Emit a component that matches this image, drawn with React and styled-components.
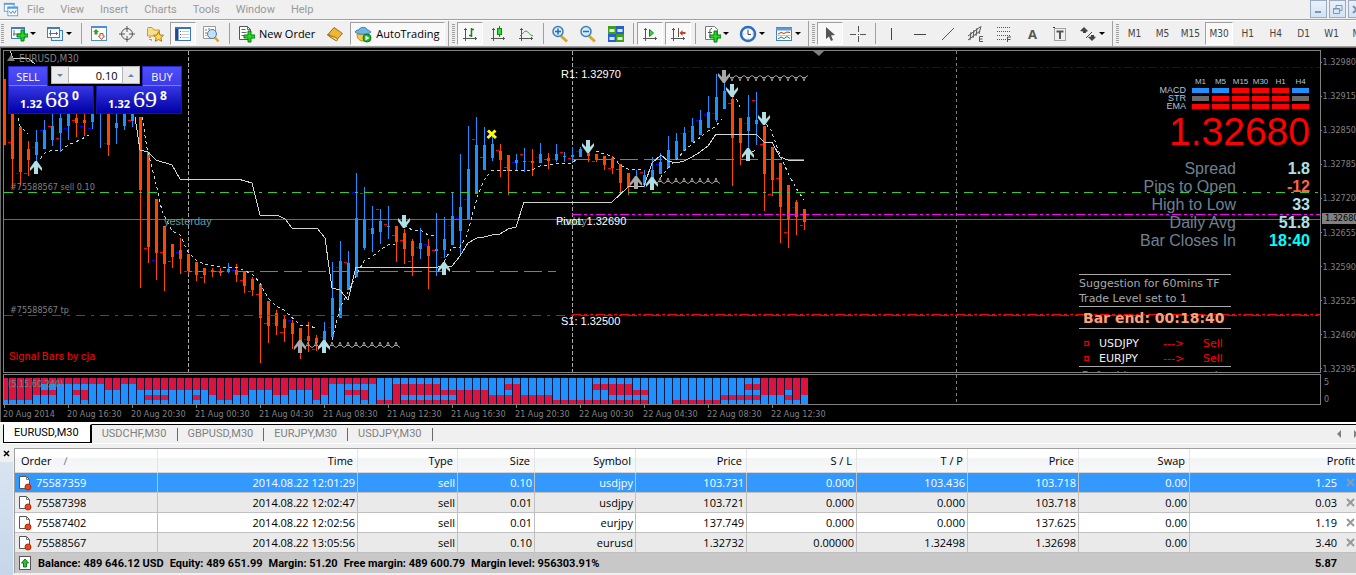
import React from "react";
import styled, { createGlobalStyle, css } from "styled-components";

const UP = "#1e90ff";
const DOWN = "#ff4500";
const CRIMSON = "#dc143c";

const menuItems = ["File", "View", "Insert", "Charts", "Tools", "Window", "Help"];
const timeframes = ["M1", "M5", "M15", "M30", "H1", "H4", "D1", "W1", "MN"];
const chartTabs = ["EURUSD,M30", "USDCHF,M30", "GBPUSD,M30", "EURJPY,M30", "USDJPY,M30"];

const prices = [
  "1.32980", "1.32915", "1.32850", "1.32785", "1.32720",
  "1.32655", "1.32590", "1.32525", "1.32460", "1.32395",
];

const times = [
  "20 Aug 2014", "20 Aug 16:30", "20 Aug 20:30", "21 Aug 00:30", "21 Aug 04:30",
  "21 Aug 08:30", "21 Aug 12:30", "21 Aug 16:30", "21 Aug 20:30", "22 Aug 00:30",
  "22 Aug 04:30", "22 Aug 08:30", "22 Aug 12:30",
];

// [direction, high, body top, body bottom, low], one every 8px
const candles = [
  ["d", 79, 79, 145, 145], ["d", 100, 100, 159, 189], ["d", 127, 127, 172, 186], ["d", 141, 149, 160, 176],
  ["u", 130, 142, 155, 163], ["u", 120, 130, 149, 149], ["u", 114, 126, 140, 146], ["u", 114, 118, 133, 152],
  ["u", 110, 110, 126, 140], ["d", 114, 118, 123, 137], ["d", 114, 120, 123, 136], ["u", 110, 110, 122, 129],
  ["u", 110, 110, 114, 148], ["d", 110, 110, 145, 156], ["u", 110, 123, 128, 144], ["u", 110, 112, 126, 130],
  ["u", 110, 112, 121, 127], ["d", 117, 117, 190, 288], ["d", 152, 152, 247, 263], ["d", 199, 199, 253, 280],
  ["d", 226, 226, 264, 291], ["d", 244, 244, 257, 268], ["d", 238, 250, 259, 274], ["d", 254, 254, 271, 274],
  ["d", 262, 262, 275, 281], ["d", 268, 268, 275, 283], ["d", 268, 270, 272, 277], ["d", 268, 271, 273, 276],
  ["u", 263, 269, 272, 273], ["d", 264, 270, 275, 282], ["d", 272, 272, 286, 293], ["d", 277, 279, 290, 296],
  ["d", 284, 284, 318, 363], ["d", 301, 301, 326, 343], ["d", 310, 313, 326, 335], ["d", 316, 319, 328, 342],
  ["d", 320, 323, 334, 349], ["d", 328, 328, 345, 359], ["d", 322, 336, 341, 352], ["d", 335, 338, 343, 351],
  ["u", 322, 331, 344, 345], ["u", 262, 298, 337, 338], ["u", 241, 261, 318, 318], ["u", 251, 263, 290, 290],
  ["u", 173, 218, 277, 277], ["u", 187, 219, 248, 250], ["u", 206, 228, 234, 252], ["u", 209, 221, 232, 244],
  ["u", 206, 226, 227, 239], ["d", 226, 226, 242, 262], ["d", 229, 233, 249, 264], ["d", 239, 241, 256, 276],
  ["u", 228, 243, 249, 259], ["d", 239, 246, 256, 289], ["u", 213, 249, 251, 276], ["u", 217, 239, 250, 258],
  ["u", 192, 216, 245, 245], ["u", 154, 207, 231, 256], ["u", 126, 169, 219, 219], ["u", 117, 145, 194, 194],
  ["u", 127, 145, 170, 170], ["u", 132, 144, 158, 161], ["d", 144, 151, 160, 177], ["d", 155, 155, 171, 195],
  ["u", 154, 160, 163, 170], ["u", 148, 161, 162, 172], ["d", 149, 161, 163, 176], ["u", 143, 154, 163, 163],
  ["d", 153, 158, 161, 169], ["u", 144, 154, 160, 162], ["u", 152, 156, 157, 162], ["u", 147, 155, 157, 162],
  ["u", 147, 149, 157, 157], ["d", 150, 153, 156, 162], ["d", 154, 154, 160, 162], ["d", 156, 156, 165, 170],
  ["d", 156, 158, 168, 174], ["d", 164, 164, 183, 195], ["d", 173, 173, 187, 195], ["u", 170, 177, 184, 185],
  ["u", 170, 175, 185, 187], ["u", 157, 170, 179, 181], ["u", 153, 162, 174, 174], ["u", 136, 150, 168, 168],
  ["u", 133, 141, 160, 160], ["u", 127, 133, 151, 151], ["u", 118, 126, 142, 142], ["u", 110, 120, 135, 135],
  ["u", 96, 112, 128, 128], ["u", 74, 97, 120, 122], ["u", 74, 91, 109, 109], ["d", 97, 99, 138, 186],
  ["d", 118, 118, 143, 165], ["u", 95, 117, 131, 148], ["u", 92, 120, 124, 145], ["d", 126, 126, 174, 211],
  ["d", 147, 147, 180, 196], ["d", 163, 163, 207, 243], ["d", 185, 185, 220, 248], ["d", 200, 202, 217, 235],
  ["d", 209, 209, 222, 230],
];

// small open and close marks to the left of a candle: index, y
const redMarks = [
  [1, 142], [3, 173], [6, 126], [7, 138], [9, 120], [16, 120], [18, 248], [20, 252], [21, 261], [23, 271],
  [25, 277], [27, 271], [30, 280], [31, 291], [32, 294], [33, 323], [35, 332], [37, 345], [39, 349], [43, 262],
  [45, 193], [47, 209], [48, 224], [49, 235], [50, 240], [51, 261], [54, 250], [59, 139], [60, 157], [62, 150],
  [63, 167], [65, 154], [68, 159], [70, 152], [71, 158], [74, 161], [76, 168], [77, 169], [80, 172], [91, 103],
  [94, 100], [95, 144], [96, 194], [97, 178], [98, 232], [100, 225],
];
const blueMarks = [
  [2, 173], [4, 147], [5, 130], [8, 128], [10, 126], [11, 128], [13, 143], [19, 260], [22, 252], [24, 271],
  [26, 271], [28, 271], [29, 270], [34, 323], [36, 320], [38, 339], [40, 337], [41, 327], [42, 267], [44, 192],
  [46, 229], [52, 247], [53, 244], [55, 257], [56, 225], [57, 218], [58, 199], [61, 134], [64, 162], [66, 161],
  [67, 157], [69, 159], [72, 151], [82, 164], [85, 133], [86, 131], [87, 120], [88, 114], [89, 113], [90, 79],
  [93, 123], [99, 207],
];

const slowLines = [
  "10,51 13,58 28,58 35,64",
  "135,117 140,150 148,152 156,160 172,165 180,179 238,179 252,183 260,215 277,215 285,219 292,228 317,228 325,238 332,288 340,290 348,300 356,267 438,267 452,266 460,256 468,243 477,238 484,237 492,235 500,234 508,229 516,227 524,202 612,202 628,187 636,186 644,186 652,163 661,155 668,161 676,163 684,161 692,157 700,152 708,146 716,134 756,134 764,142 772,142 780,157 788,160 804,160",
];

const fastLines = [
  "18,118 20,126 28,134",
  "40,159 45,153 52,150 62,150 68,145 80,140 89,135",
  "142,117 147,148 157,188 162,211 172,231 180,235 188,252 196,260 204,264 220,267 236,267 252,274 260,283 268,298 276,306 284,310 300,325 310,326 315,328",
  "332,340 340,308 348,292 356,276 364,261 372,257 380,250 388,245 395,244",
  "404,225 412,230 422,231 428,235 436,235",
  "444,262 452,247 460,247 467,235 472,216 477,198 484,180 492,170 532,170 540,166 556,164 572,163 576,160",
  "596,151 604,154 612,156 620,165 628,169 644,170",
  "660,178 668,168 676,160 684,151 692,144 708,131 716,126 722,119",
  "732,95 737,100 740,107",
  "752,152 757,149",
  "766,124 771,130 780,155 788,173 796,188 804,200",
];

// x, y of the middle, down, muted
const arrows = [
  [36, 167], [404, 222, true], [444, 268], [300, 346, false, true], [324, 346], [588, 147, true],
  [636, 182, false, true], [652, 183], [724, 77, true, true], [732, 91, true], [748, 154], [764, 119, true],
];

// five cells from top to bottom for each bar, then how many times it repeats
const signalRuns = [
  ["RRRRB", 4], ["RRRBB", 1], ["RBRBB", 2], ["RBBBB", 2], ["RBRBB", 1], ["RBRRB", 1], ["RBBBB", 2], ["RRBBB", 2],
  ["RBBBB", 2], ["RRBBB", 1], ["RRBRB", 3], ["RRBBB", 3], ["RRBRB", 1], ["RRBBB", 1], ["RRRBB", 1], ["RRRRB", 2],
  ["RRRBB", 2], ["RRBBB", 3], ["RRRBB", 2], ["RRBBB", 3], ["RRRRB", 1], ["RRRBB", 1], ["RBBBB", 2], ["RBRBB", 2],
  ["RBRRB", 1], ["RBBBB", 1], ["BBBBR", 2], ["BRRRR", 1], ["BRRBR", 5], ["BBRBR", 2], ["BBRRR", 4], ["BBBRR", 2],
  ["BRBRR", 1], ["BRRRR", 1], ["BBBRR", 4], ["BBBBR", 5], ["BRBBR", 2], ["BRRBR", 3], ["BBRBR", 2], ["BBBBB", 3],
  ["BBBBR", 6], ["BBBRB", 3], ["BRBRB", 2], ["RRRBB", 3], ["RRBRB", 1], ["RRRRB", 1], ["RRRBB", 1],
];
const signals = signalRuns.flatMap(([cells, count]) => Array(count).fill(cells));
const signalRows = [[378, 6], [384, 6], [390, 5], [395, 5], [400, 4]];

const trendRows = [
  { name: "MACD", cells: ["b", "b", "r", "r", "r", "b"] },
  { name: "STR", cells: ["g", "r", "r", "r", "r", "g"] },
  { name: "EMA", cells: ["r", "r", "r", "r", "r", "r"] },
];
const trendColors = { b: UP, r: "#ff0000", g: "#696969" };

const stats = [
  ["Spread", "1.8", "#b0e0e6"],
  ["Pips to Open", "-12", "#ff6347"],
  ["High to Low", "33", "#b0e0e6"],
  ["Daily Avg", "51.8", "#b0e0e6"],
  ["Bar Closes In", "18:40", "#00ffff"],
];

const columns = [
  ["Order", 143], ["Time", 200], ["Type", 100], ["Size", 77], ["Symbol", 101], ["Price", 111],
  ["S / L", 110], ["T / P", 111], ["Price", 111], ["Swap", 111], ["Profit", null],
];

const orders = [
  ["75587359", "2014.08.22 12:01:29", "sell", "0.10", "usdjpy", "103.731", "0.000", "103.436", "103.718", "0.00", "1.25"],
  ["75587398", "2014.08.22 12:02:47", "sell", "0.01", "usdjpy", "103.721", "0.000", "0.000", "103.718", "0.00", "0.03"],
  ["75587402", "2014.08.22 12:02:56", "sell", "0.01", "eurjpy", "137.749", "0.000", "0.000", "137.625", "0.00", "1.19"],
  ["75588567", "2014.08.22 13:05:56", "sell", "0.10", "eurusd", "1.32732", "0.00000", "1.32498", "1.32698", "0.00", "3.40"],
];

const summary = [
  "Balance: 489 646.12 USD", "Equity: 489 651.99", "Margin: 51.20",
  "Free margin: 489 600.79", "Margin level: 956303.91%",
];

/* ---------- icons ---------- */

const Icon = ({ children, size = 18 }) => (
  <svg width={size} height={size} viewBox="0 0 18 18" fill="none" aria-hidden="true">{children}</svg>
);

const Plus = ({ x = 10, y = 10 }) => (
  <path d={`M${x} ${y - 4}h3v4h4v3h-4v4h-3v-4h-4v-3h4z`} fill="#1edb1e" stroke="#087a10" />
);

const Axes = () => (
  <path d="M4.5 3v13M2 13.500h14M3 4.500h3M14.500 12v3" stroke="#555" />
);

const icons = {
  newChart: <><rect x="1.500" y="2.500" width="13" height="11" fill="#fff" stroke="#3b80c4" /><path d="M1 3h14" stroke="#3b80c4" strokeWidth="2" /><path d="M4 5v6M3 9h8" stroke="#55708a" /><Plus x={11} y={9} /></>,
  profiles: <><rect x="5.500" y="5.500" width="11" height="10" fill="#e5f0fb" stroke="#3b80c4" /><rect x="1.500" y="2.500" width="12" height="10" fill="#fff" stroke="#3b80c4" /><path d="M1 3h13" stroke="#3b80c4" strokeWidth="2" /><path d="M4.500 5v6M3 8.500h9M10.500 7v3" stroke="#55708a" /></>,
  market: <><rect x="1.500" y="1.500" width="15" height="14" fill="#fff" stroke="#4a8fd0" /><path d="M1 2h16" stroke="#4a8fd0" strokeWidth="2" /><path d="M6 4l3 3H7.500v2.500h-3V7H3z" fill="#29a329" /><path d="M11.500 14.500L14.500 11H13V8.500h-3V11H8.500z" fill="#fff0e8" stroke="#d8481c" /></>,
  target: <><circle cx="9" cy="9" r="5.500" stroke="#555" /><path d="M9 1v6M9 11v6M1 9h6M11 9h6" stroke="#555" /></>,
  navigator: <><path d="M1.500 3.500V11h12V5H8L6 2.500H2z" fill="#f7df8c" stroke="#c89b33" /><path d="M4 12v3h3" stroke="#555" strokeDasharray="1 1" /><path d="M12.500 6.500l1.500 3.500 3.500.3-2.600 2.500.8 3.600-3.200-1.900-3.200 1.900.8-3.600-2.600-2.500 3.500-.3z" fill="#ffd84d" stroke="#a97a1d" /></>,
  terminal: <><rect x="1.500" y="2.500" width="15" height="13" fill="#fff" stroke="#3b72bd" /><path d="M1 3h16" stroke="#3b72bd" strokeWidth="2" /><path d="M3 4v11" stroke="#1c4a94" strokeWidth="3" /><path d="M6 6.500h1M6 9.500h1M6 12.500h1" stroke="#d33" /><path d="M8 6.500h7M8 9.500h7M8 12.500h7" stroke="#b8cbe6" /></>,
  tester: <><path d="M1.500 1.500h12v12h-12z" fill="#fff" stroke="#999" /><path d="M4 4v7M7 3v7M11 4v5" stroke="#777" strokeDasharray="2 1" /><circle cx="10" cy="9" r="4.500" fill="#b9dcf6" fillOpacity=".85" stroke="#4f81ad" /><path d="M13 12.500l3.500 4" stroke="#d6a62e" strokeWidth="2.500" /></>,
  order: <><path d="M2.500 1.500h8l3 3v10h-11z" fill="#fff" stroke="#555" /><path d="M10.500 1.500v3h3M4.500 4.500h4M4.500 7.500h5M4.500 10.500h3" stroke="#666" /><Plus x={11} y={10} /></>,
  editor: <><path d="M1.500 10L8 2.500l8.500 6-6.500 7z" fill="#edb637" stroke="#a36b12" /><path d="M1.500 10c1.500-2 3 0 2 1.500l7 4.500c1.500-1 1-2.500-.5-3.500z" fill="#ffe08a" stroke="#a36b12" /></>,
  auto: <><path d="M3 9c0 5 3 7 6 7s6-2 6-7z" fill="#f3c94a" stroke="#b98a20" /><path d="M1 7c1-2 3-2 4-2 0-3 8-4 8 0 2 0 3 1 4 2-4 3-12 3-16 0z" fill="#6fb5e6" stroke="#3f81b5" /><circle cx="13" cy="13" r="4" fill="#1fb52b" stroke="#0b7d16" /><path d="M11.500 10.500v5l4-2.500z" fill="#fff" /></>,
  bars: <><Axes /><path d="M10.500 3v9M8 10.500h2M11 4.500h2" stroke="#0b8a16" strokeWidth="1.500" /></>,
  candles: <><Axes /><path d="M10.500 1v11" stroke="#0b8a16" /><rect x="8.500" y="3.500" width="4" height="6" fill="#2fe03c" stroke="#0b8a16" /></>,
  line: <><Axes /><path d="M3 11c3-2 4-5 6-5s3 4 7 5" stroke="#2aa336" /></>,
  zoomIn: <><path d="M10 11l6 5.500" stroke="#d6a62e" strokeWidth="3" /><circle cx="7" cy="6.500" r="5" fill="#d5ebfb" stroke="#3c7fb8" strokeWidth="1.500" /><path d="M4 6.500h6M7 3.500v6" stroke="#2a6aa5" strokeWidth="1.500" /></>,
  zoomOut: <><path d="M10 11l6 5.500" stroke="#d6a62e" strokeWidth="3" /><circle cx="7" cy="6.500" r="5" fill="#d5ebfb" stroke="#3c7fb8" strokeWidth="1.500" /><path d="M4 6.500h6" stroke="#2a6aa5" strokeWidth="1.500" /></>,
  tile: <><path d="M1 1h8v8H1zM9 9h8v8H9z" fill="#3f9e1e" /><path d="M9 1h8v8H9zM1 9h8v8H1z" fill="#2560cf" /><path d="M2.500 4h5v3h-5zM10.500 12h5v3h-5z" fill="#d9f2cf" /><path d="M10.500 4h5v3h-5zM2.500 12h5v3h-5z" fill="#dae7ff" /></>,
  scroll: <><Axes /><path d="M8.500 4.500v7l4-3.500z" fill="#3fd34b" stroke="#0b8a16" /></>,
  shift: <><Axes /><path d="M9.500 3v9" stroke="#555" /><path d="M10.500 8l3-3v2h3v2h-3v2z" fill="#c4401e" /></>,
  indicators: <><path d="M2.500 1.500h9l3 3v10h-12z" fill="#fff" stroke="#777" /><path d="M9 3.500c-3 0-2 3-2 9M5 7.500h4" stroke="#555" /><Plus x={11} y={10} /></>,
  clock: <><circle cx="9" cy="9" r="7" fill="#f4faff" stroke="#2c6fc0" strokeWidth="2.500" /><path d="M9 5v4.500h3" stroke="#444" /><path d="M9 3.500v1M9 13.500v1M3.500 9h1M13.500 9h1" stroke="#999" /></>,
  templates: <><rect x="1.500" y="2.500" width="15" height="13" fill="#fff" stroke="#3b80c4" /><path d="M1 4h16" stroke="#5b9bdb" strokeWidth="3" /><path d="M3 9l3-1.500 3 1 3-1.500 3 .5" stroke="#b33a1e" /><path d="M1.500 10.500h15" stroke="#a9c8ea" /><path d="M3 14l3-2 3 1.500 3-2 3 2" stroke="#238f2b" /></>,
  cursor: <path d="M5 2v12l3-2.500L10 16l2-1-2-4.500 4-.5z" fill="#555" />,
  cross: <path d="M9.500 1v6M9.500 11v6M1 9.500h6M11 9.500h6M9 9.500h1" stroke="#555" />,
  vline: <path d="M8.500 3v12" stroke="#444" />,
  hline: <path d="M3 9.500h12" stroke="#444" />,
  trend: <path d="M3 15L15 3" stroke="#555" />,
  channel: <><path d="M1 11L13 2M1 15L13 6M4 7l-1 8M7 5l-1 8M10 3l-1 8M14 1l-2 8" stroke="#555" /><path d="M16 11.500h-3.500v5H16M13 14h2.500" stroke="#555" /></>,
  fibo: <><path d="M2 2.500h13M2 6.500h13M2 10.500h13M2 14.500h9" stroke="#555" strokeDasharray="1 1" /><path d="M12.500 17v-5H16M13 14.500h2.500" stroke="#555" /></>,
  label: <><rect x="3.500" y="3.500" width="11" height="12" stroke="#555" strokeDasharray="1 1" /><path d="M2 2.500h2" stroke="#333" /><path d="M5.500 6.500h7M9 6v8" stroke="#555" strokeWidth="2" /></>,
  shapes: <><path d="M5 2l4 4-2 1v1H4V6.500L1 6zM13 16l4-4-2-.5V10h-3v1.500L9 12z" fill="#444" /><path d="M7 13L13 7" stroke="#444" /></>,
};

const OrderIcon = () => (
  <svg width="14" height="16" viewBox="0 0 14 16" fill="none" aria-hidden="true">
    <path d="M1.500 1.500h7l3 3v9h-10z" fill="#fff" stroke="#555" />
    <path d="M8.500 1.500v3h3" stroke="#777" />
    <circle cx="10" cy="12" r="3" fill="#e8461e" stroke="#a82c0c" />
  </svg>
);

const BalanceIcon = () => (
  <svg width="14" height="14" viewBox="0 0 14 14" fill="none" aria-hidden="true">
    <rect x="1.500" y=".5" width="11" height="13" fill="#fff" stroke="#555" />
    <path d="M7 3l3.500 4H8.500v4h-3V7h-2z" fill="#2fc02f" stroke="#0b7d16" />
  </svg>
);

/* ---------- chart drawing ---------- */

const SignalArrow = ({ x, y, down, muted }) => (
  <g transform={`translate(${x} ${y})${down ? " scale(1 -1)" : ""}`}>
    <path d="M-6 1L-1 -6H1L6 1V4L2 0V7H-2V0L-6 4Z" fill={muted ? "#a9a9a9" : "#b0e0e6"} />
  </g>
);

const Scallops = ({ from, to, y, down }) => {
  const xs = [];
  for (let x = from; x <= to; x += 8) xs.push(x);
  return (
    <g transform={`translate(0 ${y})${down ? " scale(1 -1)" : ""}`} stroke="#a39a94" fill="none">
      {xs.map((x) => <path key={x} d={`M${x - 4} 2.500Q${x - 1} 2 ${x} -3Q${x + 1} 2 ${x + 4} 2.500M${x - 2} .5h4`} />)}
    </g>
  );
};

const PriceChart = () => (
  <PlotSvg height="321">
    <g transform="translate(-4 -51)" shapeRendering="crispEdges">
      <g stroke="#a9a9a9" strokeDasharray="4 2">
        <path d="M188.500 51V372M572.500 51V372" />
        <path d="M956.500 51V372" stroke="#808080" strokeDasharray="3 3" />
      </g>
      <path d="M572 67.500H4000" stroke="#0000ff" strokeDasharray="9 3 3 3 3 3" opacity=".8" />
      <path d="M188 271.500H556M572 159.500H804" stroke="#708090" strokeDasharray="18 6" />
      <path d="M4 219.500H4000" stroke="#696969" />

      {candles.map(([dir, high, top, bottom, low], i) => {
        const x = 4 + i * 8;
        return (
          <g key={i} fill={dir === "u" ? UP : DOWN}>
            <rect x={x} y={high} width="1" height={low - high} />
            <rect x={x - 1} y={top} width="3" height={Math.max(bottom - top, 1)} />
          </g>
        );
      })}
      {redMarks.map(([i, y]) => <rect key={i} x={i * 8} y={y} width="3" height="1" fill="#ff0000" />)}
      {blueMarks.map(([i, y]) => <rect key={i} x={i * 8} y={y} width="3" height="1" fill="#0000ff" />)}

      <path d="M4 192.500H4000" stroke="#32cd32" strokeDasharray="9 6 3 6" />
      <path d="M4 315.500H4000" stroke="#ff0000" strokeDasharray="9 6 3 6" />
      <path d="M572 314.500H4000" stroke="#ff0000" strokeDasharray="9 3 3 3 3 3" />
      <path d="M572 214.500H4000" stroke="#ff00ff" strokeDasharray="9 3 3 3 3 3" />

      {slowLines.map((points) => <polyline key={points} points={points} fill="none" stroke="#d3d3d3" />)}
      {fastLines.map((points) => (
        <polyline key={points} points={points} fill="none" stroke="#b0e0e6" strokeDasharray="3 3" />
      ))}
    </g>
    <g transform="translate(-4 -51)">
      <Scallops from={308} to={396} y={345} />
      <Scallops from={660} to={716} y={181} />
      <Scallops from={732} to={804} y={78} down />
      {arrows.map(([x, y, down, muted]) => (
        <SignalArrow key={`${x}-${y}`} x={x} y={y} down={down} muted={muted} />
      ))}
      <path d="M488 130.500L496 138M495.500 130.500L487.500 138" stroke="#ffff00" strokeWidth="3" />
      <path d="M813 51h11l-5 5z" fill="#808080" />
      <path d="M7 61h8l-4-6z" fill="#808080" />
      <ChartLabel x="19" y="62" $size={10}>EURUSD,M30</ChartLabel>
      <ChartLabel x="10" y="190">#75588567 sell 0.10</ChartLabel>
      <ChartLabel x="10" y="313">#75588567 tp</ChartLabel>
      <Caption x="9" y="360" fill="#ff0000">Signal Bars by cja</Caption>
      <LevelLabel x="164" y="225" fill="#5f9ea0">yesterday</LevelLabel>
      <LevelLabel x="560" y="225" fill="#5f9ea0">today</LevelLabel>
      <LevelLabel x="561" y="78">R1: 1.32970</LevelLabel>
      <LevelLabel x="556" y="225">Pivot: 1.32690</LevelLabel>
      <LevelLabel x="561" y="325">S1: 1.32500</LevelLabel>
    </g>
  </PlotSvg>
);

const SignalChart = () => (
  <PlotSvg height="29">
    <g transform="translate(-4 -375)" shapeRendering="crispEdges">
      <rect x="4" y="378" width="804" height="26" fill="#0a1440" />
      {signals.map((cells, i) => cells.split("").map((cell, row) => (
        <rect
          key={`${i}-${row}`}
          x={1 + i * 8}
          y={signalRows[row][0]}
          width="7"
          height={signalRows[row][1]}
          fill={cell === "R" ? CRIMSON : UP}
        />
      )))}
      <path d="M956.500 375V404" stroke="#808080" strokeDasharray="3 3" />
      <ChartLabel x="8" y="387">(5,15,60,240)</ChartLabel>
    </g>
  </PlotSvg>
);

/* ---------- parts ---------- */

const Tool = ({ name, icon, active, menu, children }) => (
  <ToolButton type="button" title={name} aria-label={name} aria-pressed={active} $active={active} $menu={menu}>
    {icon && <Icon>{icons[icon]}</Icon>}
    {children}
    {menu && <Caret />}
  </ToolButton>
);

const TradePanel = () => (
  <Trade>
    <TradeRow>
      <TradeSide type="button">SELL</TradeSide>
      <Volume>
        <Step type="button" aria-label="Decrease volume"><StepMark $down /></Step>
        <VolumeInput type="text" aria-label="Volume" defaultValue="0.10" />
        <Step type="button" aria-label="Increase volume"><StepMark /></Step>
      </Volume>
      <TradeSide type="button">BUY</TradeSide>
    </TradeRow>
    <TradeRow>
      <Quote type="button"><span>1.32</span><Big>68</Big><Pip>0</Pip></Quote>
      <Quote type="button"><span>1.32</span><Big>69</Big><Pip>8</Pip></Quote>
    </TradeRow>
  </Trade>
);

const Dashboard = () => (
  <Info>
    <TrendGrid>
      <span />
      {timeframes.slice(0, 6).map((frame) => <TrendHead key={frame}>{frame}</TrendHead>)}
      {trendRows.map((row) => (
        <React.Fragment key={row.name}>
          <TrendName>{row.name}</TrendName>
          {row.cells.map((cell, i) => <TrendCell key={i} $color={trendColors[cell]} />)}
        </React.Fragment>
      ))}
    </TrendGrid>
    <BigPrice>1.32680</BigPrice>
    <Stats>
      {stats.map(([label, value, color]) => (
        <React.Fragment key={label}>
          <dt>{label}</dt>
          <StatValue $color={color}>{value}</StatValue>
        </React.Fragment>
      ))}
    </Stats>
  </Info>
);

const Suggestions = () => (
  <Advice>
    <AdviceBlock>
      <AdviceLine>Suggestion for 60mins TF</AdviceLine>
      <AdviceLine>Trade Level set to 1</AdviceLine>
    </AdviceBlock>
    <AdviceBlock>
      <BarEnd>Bar end: 00:18:40</BarEnd>
    </AdviceBlock>
    <AdviceBlock $tall>
      {["USDJPY", "EURJPY"].map((pair) => (
        <PairLine key={pair}>
          <span>¤</span><PairName>{pair}</PairName><span>---&gt;</span><span>Sell</span>
        </PairLine>
      ))}
    </AdviceBlock>
    <AdviceBlock>
      <Refresh>Refreshing every second</Refresh>
    </AdviceBlock>
  </Advice>
);

export default function App() {
  return (
    <Terminal>
      <GlobalStyle />
      <MenuBar>
        <Icon size={16}>
          <rect x="1.500" y="1.500" width="11" height="9" fill="#fff" stroke="#5a9be0" />
          <rect x="5.500" y="5.500" width="11" height="10" fill="#fff" stroke="#5a9be0" />
          <path d="M1 2h12M5 6.500h12" stroke="#5a9be0" strokeWidth="2" />
          <path d="M7 10l2 3 2-3 2 3 2-4" stroke="#3f80d0" />
        </Icon>
        <Menus>
          {menuItems.map((item) => <MenuButton type="button" key={item}>{item}</MenuButton>)}
        </Menus>
        <WindowButtons>
          <WindowButton type="button" aria-label="Minimize">
            <svg width="11" height="11"><path d="M2 8h6" stroke="#7d94b0" strokeWidth="2" /></svg>
          </WindowButton>
          <WindowButton type="button" aria-label="Restore">
            <svg width="11" height="11" fill="none" stroke="#7d94b0"><path d="M4 4V1.500h6V6.500H8M1.500 4.500h6v5h-6zM1 5h7" /></svg>
          </WindowButton>
          <WindowButton type="button" aria-label="Close">
            <svg width="11" height="11"><path d="M2 2l7 7M9 2l-7 7" stroke="#7d94b0" strokeWidth="2" /></svg>
          </WindowButton>
        </WindowButtons>
      </MenuBar>

      <ToolBar>
        <Grip $first />
        <Tool name="New chart" icon="newChart" menu />
        <Tool name="Profiles" icon="profiles" menu />
        <Separator $wide />
        <Tool name="Market Watch" icon="market" />
        <Tool name="Data Window" icon="target" />
        <Tool name="Navigator" icon="navigator" />
        <Tool name="Terminal" icon="terminal" active />
        <Tool name="Strategy Tester" icon="tester" />
        <Separator $wide />
        <Tool name="New Order" icon="order"><ToolText>New Order</ToolText></Tool>
        <Tool name="MetaEditor" icon="editor" />
        <Tool name="AutoTrading" icon="auto" active><ToolText>AutoTrading</ToolText></Tool>
        <Grip />
        <Tool name="Bar Chart" icon="bars" active />
        <Tool name="Candlesticks" icon="candles" />
        <Tool name="Line Chart" icon="line" />
        <Separator />
        <Tool name="Zoom In" icon="zoomIn" />
        <Tool name="Zoom Out" icon="zoomOut" />
        <Tool name="Tile Windows" icon="tile" />
        <Separator />
        <Tool name="Auto Scroll" icon="scroll" active />
        <Tool name="Chart Shift" icon="shift" active />
        <Separator />
        <Tool name="Indicators" icon="indicators" menu />
        <Tool name="Periods" icon="clock" menu />
        <Tool name="Templates" icon="templates" menu />
        <Grip />
        <Tool name="Cursor" icon="cursor" active />
        <Tool name="Crosshair" icon="cross" />
        <Separator />
        <Tool name="Vertical Line" icon="vline" />
        <Tool name="Horizontal Line" icon="hline" />
        <Tool name="Trendline" icon="trend" />
        <Tool name="Equidistant Channel" icon="channel" />
        <Tool name="Fibonacci Retracement" icon="fibo" />
        <Tool name="Text"><Letter>A</Letter></Tool>
        <Tool name="Text Label" icon="label" />
        <Tool name="Arrows" icon="shapes" menu />
        <Grip />
        {timeframes.map((frame) => (
          <Tool key={frame} name={frame} active={frame === "M30"}><Frame>{frame}</Frame></Tool>
        ))}
      </ToolBar>

      <ChartWindow>
        <ChartRow>
          <Plot>
            <PriceChart />
            <TradePanel />
            <Dashboard />
            <Suggestions />
          </Plot>
          <PriceAxis>
            {prices.map((price) => <PriceTick key={price}>{price}</PriceTick>)}
            <CurrentPrice>1.32680</CurrentPrice>
          </PriceAxis>
        </ChartRow>
        <ChartRow>
          <Plot><SignalChart /></Plot>
          <LevelAxis><span>5</span><span>0</span></LevelAxis>
        </ChartRow>
        <TimeAxis>
          {times.map((time) => <TimeTick key={time}>{time}</TimeTick>)}
        </TimeAxis>
      </ChartWindow>

      <Tabs>
        {chartTabs.map((tab, i) => <Tab type="button" key={tab} $active={i === 0}>{tab}</Tab>)}
        <TabFill />
        <TabArrow type="button" aria-label="Previous tabs"><svg width="5" height="8"><path d="M4 0v8L0 4z" fill="#808080" /></svg></TabArrow>
        <TabArrow type="button" aria-label="Next tabs"><svg width="5" height="8"><path d="M1 0v8l4-4z" fill="#808080" /></svg></TabArrow>
      </Tabs>

      <TradeArea>
        <Side>
          <SideClose type="button" aria-label="Close panel">
            <svg width="7" height="7"><path d="M1 1l5 5M6 1L1 6" stroke="#000" strokeWidth="1.500" /></svg>
          </SideClose>
        </Side>
        <OrderTable>
          <colgroup>
            {columns.map(([name, width], i) => <Column key={i} $width={width} />)}
          </colgroup>
          <thead>
            <tr>
              {columns.map(([name], i) => (
                <HeadCell key={i} scope="col">{name}{i === 0 && <SortMark>∕</SortMark>}</HeadCell>
              ))}
            </tr>
          </thead>
          <tbody>
            {orders.map((order, row) => (
              <OrderRow key={order[0]} $selected={row === 0} $shaded={row % 2 === 1}>
                {order.map((value, i) => (
                  <Cell key={i}>
                    {i === 0 && <FirstCell><OrderIcon />{value}</FirstCell>}
                    {i > 0 && i < 10 && value}
                    {i === 10 && (
                      <ProfitCell>
                        {value}
                        <CloseOrder type="button" aria-label={`Close order ${order[0]}`}>
                          <svg width="9" height="9"><path d="M1 1l7 7M8 1L1 8" stroke="#999" strokeWidth="2" /></svg>
                        </CloseOrder>
                      </ProfitCell>
                    )}
                  </Cell>
                ))}
              </OrderRow>
            ))}
          </tbody>
          <tfoot>
            <tr>
              <TotalCell colSpan={10}>
                <Totals><BalanceIcon />{summary.map((item) => <span key={item}>{item}</span>)}</Totals>
              </TotalCell>
              <TotalCell $end>5.87</TotalCell>
            </tr>
          </tfoot>
        </OrderTable>
      </TradeArea>
    </Terminal>
  );
}

/* ---------- styles ---------- */

const GlobalStyle = createGlobalStyle`
  * {
    box-sizing: border-box;
  }
  body {
    margin: 0;
    background: #fff;
    overflow: hidden;
  }
  button, input {
    font: inherit;
    color: inherit;
    margin: 0;
    padding: 0;
    border: 0;
    background: none;
  }
  svg {
    display: block;
    flex: none;
  }
`;

const Terminal = styled.div`
  display: flex;
  flex-direction: column;
  overflow: hidden;
  color: #000;
  background: #f0f0f0;
  font: 11px "Open Sans", "Noto Sans", sans-serif;
`;

const MenuBar = styled.div`
  display: flex;
  align-items: center;
  height: 20px;
  padding-left: 3px;
  border-bottom: 1px solid #a0a0a0;
`;

const Menus = styled.nav`
  display: flex;
  flex: 1;
  color: #999;
  font-family: Roboto, sans-serif;
`;

const MenuButton = styled.button`
  padding: 0 8px;
  line-height: 18px;
`;

const WindowButtons = styled.div`
  display: flex;
  align-self: flex-start;
  gap: 2px;
  margin-right: -9px;
`;

const WindowButton = styled.button`
  display: flex;
  align-items: center;
  justify-content: center;
  width: 17px;
  height: 18px;
  border: 1px solid #9aabbf;
  background: linear-gradient(#e8f1fa, #d3e3f3);
`;

const ToolBar = styled.div`
  display: flex;
  height: 27px;
  border-top: 1px solid #fff;
  border-bottom: 1px solid #a0a0a0;
  overflow: hidden;
`;

const Grip = styled.span`
  flex: none;
  width: ${(p) => (p.$first ? 5 : 10)}px;
  border-left: ${(p) => (p.$first ? "0" : "1px solid #a0a0a0")};
  margin-left: ${(p) => (p.$first ? 0 : 2)}px;
  margin-right: ${(p) => (p.$first ? 0 : -2)}px;
  background: repeating-linear-gradient(#a0a0a0 0 1px, transparent 1px 2px) ${(p) => (p.$first ? 1 : 3)}px 3px / 3px 20px no-repeat;
`;

const Separator = styled.span`
  flex: none;
  width: 1px;
  height: 21px;
  margin: 2px ${(p) => (p.$wide ? 3 : 2)}px 0 ${(p) => (p.$wide ? 4 : 3)}px;
  background: #a0a0a0;
`;

const ToolButton = styled.button`
  display: flex;
  flex: none;
  align-items: center;
  justify-content: center;
  gap: 4px;
  min-width: ${(p) => (p.$menu ? 36 : 28)}px;
  height: 23px;
  margin-top: 1px;
  padding: 0 4px;
  ${(p) => p.$menu && css`
    gap: 2px;
  `}
  ${(p) => p.$active && css`
    min-width: 26px;
    margin-left: 1px;
    margin-right: 1px;
    padding: 0 3px;
    border: 1px solid;
    border-color: #a0a0a0 #fff #fff #a0a0a0;
    background: #f8f8f8;
  `}
`;

const ToolText = styled.span`
  padding-right: 2px;
`;

const Caret = styled.span`
  border: 3px solid transparent;
  border-top-color: #000;
  border-bottom: 0;
`;

const Letter = styled.span`
  color: #555;
  font: bold 13px "Open Sans", sans-serif;
`;

const Frame = styled.span`
  color: #444;
  font: 10px "DejaVu Sans Condensed", "DejaVu Sans", sans-serif;
`;

const ChartWindow = styled.div`
  padding: 2px 0 0 2px;
  border-top: 1px solid #696969;
  border-left: 1px solid #696969;
  background: #000;
  color: #808080;
  font: 9px "DejaVu Sans Condensed", "DejaVu Sans", sans-serif;
`;

const ChartRow = styled.div`
  display: flex;
  & + & {
    margin-top: 1px;
  }
`;

const Plot = styled.div`
  position: relative;
  flex: 1;
  min-width: 0;
  border: 1px solid #808080;
  overflow: hidden;
`;

const PlotSvg = styled.svg`
  width: 100%;
`;

const ChartLabel = styled.text`
  fill: #808080;
  font: ${(p) => p.$size || 9}px "DejaVu Sans Condensed", "DejaVu Sans", sans-serif;
`;

const Caption = styled.text`
  font: 11px Roboto, sans-serif;
`;

const LevelLabel = styled.text`
  fill: ${(p) => p.fill || "#fff"};
  font: 11px "Liberation Sans", Arial, sans-serif;
`;

const Trade = styled.div`
  position: absolute;
  left: 4px;
  top: 15px;
  width: 174px;
  color: #fff;
  background: #000;
`;

const TradeRow = styled.div`
  display: flex;
  justify-content: space-between;
`;

const TradeSide = styled.button`
  width: 40px;
  height: 20px;
  border: 1px solid #2424c8;
  border-bottom: 0;
  background: linear-gradient(#5050fa, #3a3aea);
  font: 11px/18px "Open Sans", sans-serif;
  text-align: center;
  box-shadow: inset 0 -1px #7d7df5;
`;

const Volume = styled.div`
  display: flex;
  width: 89px;
  height: 18px;
  border: 1px solid #a0a0a0;
  background: #fff;
  color: #000;
`;

const Step = styled.button`
  display: flex;
  flex: none;
  align-items: center;
  justify-content: center;
  width: 16px;
  background: #ececec;
  box-shadow: 0 0 0 1px #b4b4b4;
`;

const StepMark = styled.span`
  border: 3px solid transparent;
  ${(p) => (p.$down
    ? "border-top-color: #6c83a8; border-bottom: 0;"
    : "border-bottom-color: #6c83a8; border-top: 0;")}
`;

const VolumeInput = styled.input`
  width: 100%;
  min-width: 0;
  padding-right: 5px;
  font: 11px "Open Sans", sans-serif;
  text-align: right;
  outline: 0;
`;

const Quote = styled.button`
  display: flex;
  align-items: flex-end;
  gap: 3px;
  width: 86px;
  height: 28px;
  padding: 0 0 2px 11px;
  border: 1px solid #1414b4;
  border-top: 0;
  background: linear-gradient(#3636e6, #0000a4);
  font: bold 11px/15px "Open Sans", sans-serif;
`;

const Big = styled.span`
  font: 24px/24px "Liberation Serif", serif;
`;

const Pip = styled.span`
  align-self: flex-start;
  font-size: 12px;
  line-height: 20px;
`;

const Info = styled.section`
  position: absolute;
  top: 26px;
  right: 10px;
  display: flex;
  flex-direction: column;
  align-items: flex-end;
  font-family: "Liberation Sans", Arial, sans-serif;
`;

const TrendGrid = styled.div`
  display: grid;
  grid-template-columns: 32px repeat(6, 17px);
  grid-auto-rows: 8px;
  column-gap: 3px;
  align-items: center;
  margin-right: 1px;
  padding-top: 1px;
  color: #b0c4de;
  font-size: 8px;
  line-height: 8px;
`;

const TrendHead = styled.span`
  text-align: center;
`;

const TrendName = styled.span`
  padding-right: 3px;
  font-size: 9px;
  text-align: right;
`;

const TrendCell = styled.span`
  height: 5px;
  background: ${(p) => p.$color};
`;

const BigPrice = styled.div`
  color: #ff0000;
  font-size: 39px;
  line-height: 44px;
`;

const Stats = styled.dl`
  display: grid;
  grid-template-columns: auto 74px;
  margin: 6px 0 0;
  color: #708090;
  font-size: 16px;
  line-height: 18px;
  text-align: right;
`;

const StatValue = styled.dd`
  margin: 0;
  color: ${(p) => p.$color};
  font-weight: bold;
`;

const Advice = styled.section`
  position: absolute;
  top: 223px;
  right: 89px;
  width: 152px;
  color: #a9a9a9;
  font: 11px/15px "DejaVu Sans", sans-serif;
  white-space: nowrap;
`;

const AdviceBlock = styled.div`
  border-top: 1px solid #a9a9a9;
  padding: ${(p) => (p.$tall ? "7px 0 0" : "1px 0 0")};
`;

const AdviceLine = styled.div``;

const BarEnd = styled.div`
  padding-left: 4px;
  color: #ffa07a;
  font-size: 14px;
  font-weight: bold;
  line-height: 20px;
`;

const PairLine = styled.div`
  display: grid;
  grid-template-columns: 16px 64px 40px auto;
  padding-left: 4px;
  color: #ff0000;
`;

const PairName = styled.span`
  color: #f0f0f0;
`;

const Refresh = styled.div`
  padding-left: 3px;
  color: #5f9ea0;
`;

const PriceAxis = styled.div`
  position: relative;
  display: flex;
  flex: none;
  flex-direction: column;
  justify-content: space-between;
  width: 35px;
  padding-top: 8px;
  overflow: hidden;
`;

const PriceTick = styled.span`
  display: flex;
  align-items: center;
  gap: 1px;
  line-height: 8px;
  &::before {
    content: "";
    width: 3px;
    height: 1px;
    background: #808080;
  }
`;

const CurrentPrice = styled.span`
  position: absolute;
  top: 163px;
  left: 1px;
  right: 0;
  padding-left: 3px;
  line-height: 11px;
  background: #808080;
  color: #000;
`;

const LevelAxis = styled.div`
  display: flex;
  flex: none;
  flex-direction: column;
  justify-content: space-between;
  width: 35px;
  padding: 3px 0 1px 3px;
  line-height: 10px;
`;

const TimeAxis = styled.div`
  display: flex;
  height: 17px;
  overflow: hidden;
`;

const TimeTick = styled.span`
  flex: 0 0 64px;
  line-height: 12px;
  white-space: nowrap;
  &::before {
    content: "";
    display: block;
    width: 1px;
    height: 3px;
    margin-left: 1px;
    background: #808080;
  }
`;

const Tabs = styled.div`
  display: flex;
  height: 21px;
  padding-left: 3px;
  border-top: 2px solid #fff;
  color: #808080;
  background: #f0f0f0;
  font-family: Roboto, sans-serif;
`;

const Tab = styled.button`
  height: 19px;
  padding: 0 11px 1px 10px;
  border-top: 1px solid #000;
  background: linear-gradient(#696969, #696969) right 3px / 1px 13px no-repeat;
  line-height: 16px;
  ${(p) => p.$active && css`
    border: 1px solid #000;
    border-top-color: #fff;
    border-right-width: 2px;
    background: #fff;
    color: #000;
  `}
`;

const TabFill = styled.span`
  flex: 1;
  border-top: 1px solid #000;
`;

const TabArrow = styled.button`
  display: flex;
  align-items: center;
  width: 16px;
  padding-left: 0;
  border-top: 1px solid #000;
  &:last-child {
    width: 3px;
  }
`;

const TradeArea = styled.div`
  display: flex;
  padding-top: 4px;
  border-top: 1px solid #fff;
  min-height: 132px;
`;

const Side = styled.div`
  flex: none;
  width: 14px;
  background: linear-gradient(#d9e4f1, #c4d5e8) 0 14px / 13px 100% no-repeat;
`;

const SideClose = styled.button`
  display: flex;
  padding: 2px 0 0 3px;
`;

const OrderTable = styled.table`
  width: 100%;
  table-layout: fixed;
  align-self: flex-start;
  border-collapse: separate;
  border-spacing: 0;
  border-top: 1px solid #a0a0a0;
  border-left: 1px solid #a0a0a0;
  background: #fff;
  min-width: 0;
  flex: 1;
`;

const Column = styled.col`
  width: ${(p) => (p.$width ? `${p.$width}px` : "auto")};
`;

const HeadCell = styled.th`
  height: 24px;
  padding: 0 4px 0 0;
  border-right: 1px solid #e2e4e8;
  border-bottom: 1px solid #d5d5d5;
  background: linear-gradient(#fff 40%, #f3f4f6 41%, #f7f8fa);
  font-weight: normal;
  text-align: right;
  &:first-child {
    padding-left: 6px;
    text-align: left;
  }
  &:last-child {
    padding-right: 1px;
    border-right: 0;
  }
`;

const SortMark = styled.span`
  padding-left: 12px;
  color: #777;
`;

const OrderRow = styled.tr`
  background: ${(p) => (p.$selected ? "#3399ff" : p.$shaded ? "#eaeaea" : "#fff")};
  color: ${(p) => (p.$selected ? "#fff" : "#000")};
`;

const Cell = styled.td`
  height: 20px;
  padding: 0 2px 0 0;
  border-right: 1px solid #c0c0c0;
  border-bottom: 1px solid #c0c0c0;
  line-height: 19px;
  text-align: right;
  &:last-child {
    padding-right: 1px;
    border-right: 0;
  }
`;

const FirstCell = styled.span`
  display: flex;
  align-items: center;
  gap: 4px;
  padding-left: 3px;
`;

const ProfitCell = styled.span`
  display: flex;
  align-items: center;
  justify-content: flex-end;
  gap: 9px;
`;

const CloseOrder = styled.button`
  display: flex;
`;

const TotalCell = styled.td`
  height: 20px;
  padding: ${(p) => (p.$end ? "0 19px 0 0" : "0")};
  background: #c8c8c8;
  font-family: Roboto, sans-serif;
  font-weight: bold;
  text-align: ${(p) => (p.$end ? "right" : "left")};
`;

const Totals = styled.span`
  display: flex;
  align-items: center;
  gap: 6px;
  padding-left: 3px;
`;
